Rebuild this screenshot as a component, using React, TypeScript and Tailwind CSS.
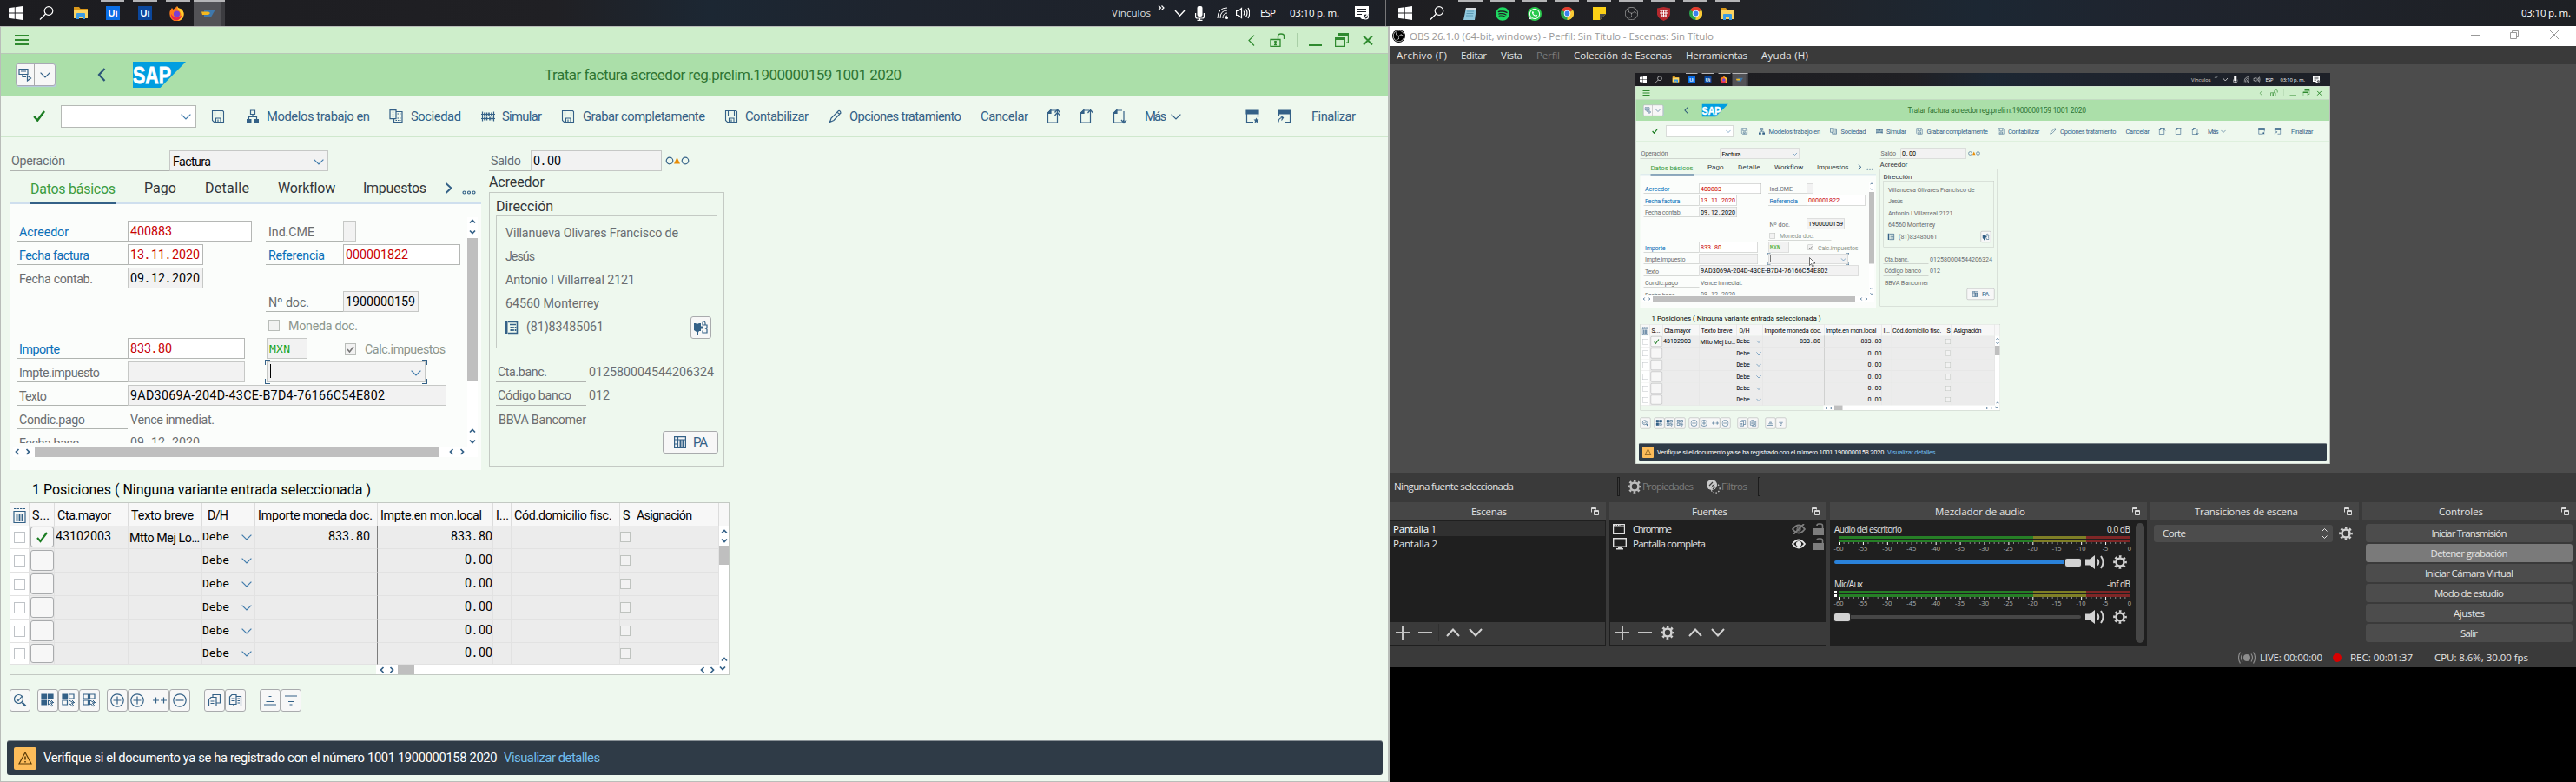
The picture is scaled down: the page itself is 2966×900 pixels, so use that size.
import React, { useLayoutEffect, useRef, useState } from "react";
import { FaSpotify, FaWhatsapp } from "react-icons/fa";
import { SiObsstudio } from "react-icons/si";

/* ---------- text ---------- */

let canvas: HTMLCanvasElement | null = null;

/** Single line of text whose tracking is computed so that it fills `w` pixels. */
function T({ w, className = "", children }: { w: number; className?: string; children: string }) {
  const ref = useRef<HTMLSpanElement>(null);
  const [tracking, setTracking] = useState(0);
  useLayoutEffect(() => {
    if (!ref.current) return;
    const cs = getComputedStyle(ref.current);
    canvas = canvas ?? document.createElement("canvas");
    const ctx = canvas.getContext("2d");
    if (!ctx) return;
    ctx.font = `${cs.fontWeight} ${cs.fontSize} ${cs.fontFamily}`;
    setTracking((w - ctx.measureText(children).width) / Math.max(1, children.length - 1));
  }, [w, children]);
  return (
    <span
      ref={ref}
      className={`block shrink-0 whitespace-pre leading-none ${className}`}
      style={{ width: w, letterSpacing: tracking }}
    >
      {children}
    </span>
  );
}

/** Fixed pitch number: every digit and point is 8px wide. */
function Mono({ children, className = "" }: { children: string; className?: string }) {
  return (
    <span className={`block shrink-0 whitespace-nowrap text-[14.25px] leading-none ${className}`}>
      {children.split(/(\.)/).map((part, i) =>
        part === "." ? (
          <span key={i} className="inline-block w-2 pr-px text-center font-medium">
            .
          </span>
        ) : (
          part
        ),
      )}
    </span>
  );
}

/* ---------- drawing helpers ---------- */

type IconProps = { className?: string; children: React.ReactNode; w?: number; h?: number };

function Ico({ className = "", children, w = 16, h = 16 }: IconProps) {
  return (
    <svg
      width={w}
      height={h}
      viewBox={`0 0 ${w} ${h}`}
      fill="none"
      stroke="currentColor"
      strokeWidth="1.2"
      className={`block shrink-0 ${className}`}
    >
      {children}
    </svg>
  );
}

function Down({ className = "text-[#427cac]" }: { className?: string }) {
  return (
    <Ico w={12} h={7} className={className}>
      <path d="M.6 .6 6 6 11.4 .6" />
    </Ico>
  );
}

const tiny = {
  up: "M1 4.5 4 1.5 7 4.5",
  down: "M1 1.5 4 4.5 7 1.5",
  left: "M4.5 1 1.5 4 4.5 7",
  right: "M1.5 1 4.5 4 1.5 7",
};

function Tiny({ dir, className = "" }: { dir: keyof typeof tiny; className?: string }) {
  const v = dir === "up" || dir === "down";
  return (
    <Ico w={v ? 8 : 6} h={v ? 6 : 8} className={`text-[#346187] ${className}`}>
      <path d={tiny[dir]} strokeWidth="1.7" />
    </Ico>
  );
}

const SaveIcon = () => (
  <Ico>
    <path d="M1.5 1.5h12l1 1v12h-11l-2-2zM4.5 1.5v6h7v-6M5.5 14.500v-4.500h5.500v4.500M8 11.500v3" strokeWidth="1.100" />
  </Ico>
);
const OrgIcon = () => (
  <Ico>
    <path d="M5.500 1h5v4.500h-5zM8 5.500v3M3.500 11V8.500h9V11" />
    <path d="M1 11h5.500v4.500H1zM9.500 11H15v4.500H9.500z" fill="currentColor" stroke="none" />
  </Ico>
);
const CompanyIcon = () => (
  <Ico>
    <path d="M1 .600h7v10H1zM8 2.500h7v12H5.500v-4M4.500 2.500v1.500M4.500 5v1.500M4.500 7.500v1.500" />
    <path d="M9.500 5h4M9.500 7.500h4M9.500 10h4M7.500 12.500h6" strokeDasharray="1.500 1" />
  </Ico>
);
const AbacusIcon = () => (
  <Ico>
    <path d="M1.500 2.500v11M14.500 2.500v11M0 5.500h16M0 10.500h16" />
    <path d="M4 3.500v4M6.500 3.500v4M9 3.500v4M12 3.500v4M4 8.500v4M6.500 8.500v4M10 8.500v4M12.500 8.500v4" strokeWidth="1.600" />
  </Ico>
);
const PencilIcon = () => (
  <Ico>
    <path d="M1.500 14.500 3 10 11.500 1.500q2-.500 2.500 2.500L6 12.500zM10 3l2.500 2.500" />
  </Ico>
);
function PageIcon({ kind }: { kind: "top" | "up" | "down" }) {
  return (
    <Ico w={17} h={18}>
      <path d="M11 2H4.500L1.500 5v11h11V13" />
      <path d="M1 5.500 5 1.500v4z" fill="currentColor" />
      {kind === "down" ? (
        <path d="M13 3v13M10 13l3 3.500 3-3.500" />
      ) : (
        <path d={kind === "up" ? "M12.500 13V1.500M9.500 5l3-3.500 3 3.500" : "M12.500 13V1M9.500 4.500l3-3.500 3 3.500M9.500 8l3-3.500 3 3.500"} />
      )}
    </Ico>
  );
}
function WindowIcon({ star }: { star?: boolean }) {
  return (
    <Ico>
      <path d="M1 1h14v4H1z" fill="currentColor" />
      {star ? (
        <>
          <path d="M1.500 5v9.500H9M14.500 5v4" />
          <path d="m12.500 9.500 1 2h2l-1.500 1.500.500 2.500-2-1.300-2 1.300.500-2.500L9.500 11.500h2z" fill="currentColor" stroke="none" />
        </>
      ) : (
        <path d="M14.500 5v9.500H8M1.500 5v2M1 14.500q0-5 5-5M3.500 7.500l3 2-2 3" />
      )}
    </Ico>
  );
}

const WindowsLogo = () => (
  <svg width="16" height="16" viewBox="0 0 16 16" className="block shrink-0 fill-white">
    <path d="M0 2.300 6.800 1.300V7.500H0zM7.700 1.200 16 0v7.500H7.700zM0 8.500h6.800v6.200L0 13.700zM7.700 8.500H16V16l-8.300-1.200z" />
  </svg>
);
const SearchGlyph = () => (
  <Ico w={17} className="text-white">
    <circle cx="11" cy="5.500" r="4.800" />
    <path d="M7.500 9 1 15.500" />
  </Ico>
);
const FolderGlyph = () => (
  <svg width="16" height="14" viewBox="0 0 16 14" className="block shrink-0">
    <path d="M0 0h6l1.500 2H16v11H0z" fill="#d9971a" />
    <path d="M0 3h16v10H0z" fill="#fcd462" />
    <path d="M3 14V8q0-1 1-1h8q1 0 1 1v6h-3v-3H6v3z" fill="#3b9be3" />
  </svg>
);
const UiPathGlyph = ({ className }: { className: string }) => (
  <div className={`flex size-4 shrink-0 items-center justify-center font-['Liberation_Sans'] text-[11px] leading-none font-bold text-white ${className}`}>
    Ui
  </div>
);
const FirefoxGlyph = () => (
  <svg width="17" height="17" viewBox="0 0 17 17" className="block shrink-0">
    <path d="M1 5 3 2l1.500 2Q7 2 9 0q1 3 4 3 4 3 3.500 7a8 7.500 0 0 1-16 0Q0 7 1 5z" fill="#ff7a1a" />
    <path d="M9 0q1 3 4 3 4 3 3.500 7a8 7.500 0 0 1-7 6.800Q16 12 12 6 9 4 9 0z" fill="#ffcf2e" />
    <circle cx="8.500" cy="9" r="3.600" fill="#7a3fd6" />
    <path d="M2 9q3 5 8 4 4-1 4.500-4-.500 7-6.500 7.300T2 9z" fill="#e8264f" />
  </svg>
);
const ChromeGlyph = () => (
  <svg width="15" height="15" viewBox="0 0 16 16" className="block shrink-0">
    <circle cx="8" cy="8" r="8" fill="#2ba24c" />
    <path d="M8 8 1.100 4A8 8 0 0 1 15 4z" fill="#e33b2e" />
    <path d="M8 8 15 4a8 8 0 0 1-7 12z" fill="#fcc934" />
    <circle cx="8" cy="8" r="4" fill="#fff" />
    <circle cx="8" cy="8" r="3.100" fill="#3b80ee" />
  </svg>
);

/* ---------- SAP screen ---------- */

function SapTaskbar() {
  return (
    <div className="relative flex h-[30px] shrink-0 items-center bg-[linear-gradient(90deg,#1c1c20_0%,#202024_40%,#1c2733_51%,#1e242e_65%,#1d2027_100%)] pl-[10px] font-['Open_Sans',sans-serif] text-[11.5px] text-white">
      <WindowsLogo />
      <div className="ml-[19px]"><SearchGlyph /></div>
      <div className="ml-[23px]"><FolderGlyph /></div>
      <div className="ml-[21px] flex items-center"><UiPathGlyph className="bg-[#0a6ee6]" /></div>
      <UiPathGlyph className="ml-[21px] bg-[#0b479c]" />
      <div className="ml-[20px]"><FirefoxGlyph /></div>
      <div className="ml-[11px] flex h-[30px] w-[36px] items-center justify-center border-r-4 border-[#3c3c40] bg-[#525256] pl-[2px]">
        <svg width="16" height="9" viewBox="0 0 16 9">
          <path d="M3 0h13l-5 8.500H3z" fill="#3f78ab" />
          <path d="M0 2.500h8l2 1.500-2 2H1z" fill="#f5b91e" />
        </svg>
      </div>
      <div className="absolute top-0 left-[116px] flex gap-[10px]">
        <div className="h-[2px] w-[27px] bg-[#b5b5b7]" />
        <div className="h-[2px] w-[28px] bg-[#b5b5b7]" />
        <div className="h-[2px] w-[28px] bg-[#b5b5b7]" />
      </div>
      <div className="absolute top-0 left-[223px] h-[2px] w-[36px] bg-[#b5b5b7]" />
      <T w={45} className="ml-[1021px] text-[#dcdcdc]">Vínculos</T>
      <Ico w={8} h={8} className="mt-[-12px] ml-[8px]"><path d="M1 1.500 3.500 4 1 6.500M4.500 1.500 7 4 4.500 6.500" /></Ico>
      <Ico w={13} h={8} className="ml-[11px]"><path d="M1 1 6.500 7 12 1" strokeWidth="1.400" /></Ico>
      <Ico w={11} h={17} className="ml-[11px]">
        <rect x="2.500" y="0" width="6" height="12" rx="2" fill="#fff" stroke="none" />
        <path d="M.6 8v4q0 2 2 2h5.800q2 0 2-2V8M5.500 14v2M2.500 16.300h6" />
      </Ico>
      <Ico w={13} h={14} className="ml-[14px]">
        <path d="M1 13Q1 1 12 1M4 13Q4 4 12 4M7 13q0-6 5-6M10 13q0-3 2-3" strokeWidth="1" />
        <circle cx="11.500" cy="12.500" r="1.500" fill="#fff" stroke="none" />
      </Ico>
      <Ico w={16} h={14} className="ml-[9px]">
        <path d="M.6 4.500h2.500L6.500 1.500v11L3 9.500H.6zM9 4.500q1.500 2.500 0 5M11.500 2.500q3 4.500 0 9M14 1q3.500 6 0 12" />
      </Ico>
      <T w={18} className="ml-[12px]">ESP</T>
      <T w={57} className="ml-[16px]">03:10 p. m.</T>
      <Ico w={17} h={16} className="ml-[18px]">
        <path d="M0 0h16v9l-3 6H8l-2-2H0z" fill="#fff" stroke="none" />
        <path d="M3 3.500h10M3 6.500h10M3 9.500h5" stroke="#1d2027" />
        <circle cx="12.500" cy="12" r="3" fill="#1d2027" />
        <path d="M10.500 14 14.500 10" />
      </Ico>
      <div className="ml-auto h-[30px] w-[5px] border-l border-[#77777a]" />
    </div>
  );
}

function SapChrome() {
  return (
    <>
      <div className="flex h-[31px] shrink-0 items-center border-b border-[#b9c8b8] bg-[#ceeecb] pl-[16px] text-[#2f8a2f]">
        <div className="flex flex-col gap-[3px]">
          <div className="h-[2px] w-[16px] bg-current" />
          <div className="h-[2px] w-[16px] bg-current" />
          <div className="h-[2px] w-[16px] bg-current" />
        </div>
        <Ico w={8} h={13} className="ml-[1404px]"><path d="M7 .6 1 6.500l6 6" /></Ico>
        <Ico w={18} h={16} className="ml-[17px]">
          <path d="M1 7.500h11v8H1zM9.500 7V3.500Q9.500 1 13 1t3.500 2.500V7" strokeWidth="1.300" />
          <path d="M6.500 9v5M5 10h3M5 13.500h3" strokeWidth="1.500" />
        </Ico>
        <div className="ml-[13px] h-4 w-px bg-[#a9cfa7]" />
        <div className="mt-[12px] ml-[13px] h-[2px] w-[15px] bg-current" />
        <Ico w={16} h={16} className="ml-[15px]">
          <path d="M4 0h12v3H4zM0 5h12v3H0z" fill="currentColor" stroke="none" />
          <path d="M.6 6v9.400h10.800V6M15.400 2v9H13" />
        </Ico>
        <Ico w={12} h={11} className="ml-[16px]"><path d="m1 .500 10 10M11 .500l-10 10" strokeWidth="2" /></Ico>
      </div>
      <div className="flex h-[48px] shrink-0 items-center bg-[#abdfa9] pl-[17px]">
        <div className="flex h-[26px] w-[46px] rounded-[3px] border border-[#a9a9b5] bg-[#f7f7f7] shadow-[1px_1px_1px_#b9c9e4]">
          <div className="flex w-[21px] items-center justify-center border-r border-[#a9a9a9]">
            <Ico w={16} h={16} className="text-[#346187]">
              <path d="M1 1.500h10v6H1zM3 4h6M5 7.500v3h4M10.500 9v6l4-3z" />
            </Ico>
          </div>
          <div className="flex flex-1 items-center justify-center"><Down className="text-[#346187]" /></div>
        </div>
        <Ico w={10} h={16} className="ml-[48px] text-[#2b5578]"><path d="M8.500 1 2 8l6.500 7" strokeWidth="2.200" /></Ico>
        <svg width="62" height="30" viewBox="0 0 62 30" className="ml-[31px] block shrink-0">
          <path d="M0 0h61L31.500 30H0z" fill="#009ee0" />
          <text x="0" y="24.500" textLength="44" lengthAdjust="spacingAndGlyphs" fontFamily="Liberation Sans" fontWeight="700" fontSize="27" fill="#fff" stroke="#fff" strokeWidth=".9">
            SAP
          </text>
        </svg>
        <T w={411} className="mt-px ml-[412px] text-[17px] text-[#2f7533]">Tratar factura acreedor reg.prelim.1900000159 1001 2020</T>
      </div>
      <div className="flex h-[48px] shrink-0 items-center border-b border-[#cfe8cd] pt-px pl-[37px] text-[14.75px] text-[#346187]">
        <Ico w={14} h={13} className="mb-[2px] text-[#1c7d23]"><path d="m1.200 7 4 4.500L13 1" strokeWidth="2.500" /></Ico>
        <div className="ml-[18px] flex h-[26px] w-[156px] items-center justify-end border border-[#b5b9b5] bg-white pr-[5px]"><Down /></div>
        <div className="ml-[17px]"><SaveIcon /></div>
        <div className="ml-[24px]"><OrgIcon /></div>
        <T w={119} className="mt-px ml-[8px]">Modelos trabajo en</T>
        <div className="ml-[22px]"><CompanyIcon /></div>
        <T w={58} className="mt-px ml-[9px]">Sociedad</T>
        <div className="ml-[23px]"><AbacusIcon /></div>
        <T w={46} className="mt-px ml-[8px]">Simular</T>
        <div className="ml-[22px]"><SaveIcon /></div>
        <T w={141} className="mt-px ml-[9px]">Grabar completamente</T>
        <div className="ml-[22px]"><SaveIcon /></div>
        <T w={73} className="mt-px ml-[8px]">Contabilizar</T>
        <div className="ml-[23px]"><PencilIcon /></div>
        <T w={129} className="mt-px ml-[8px]">Opciones tratamiento</T>
        <T w={55} className="mt-px ml-[22px]">Cancelar</T>
        <div className="ml-[21px]"><PageIcon kind="top" /></div>
        <div className="ml-[21px]"><PageIcon kind="up" /></div>
        <div className="ml-[21px]"><PageIcon kind="down" /></div>
        <T w={25} className="mt-px ml-[20px]">Más</T>
        <Down className="ml-[5px] text-[#346187]" />
        <div className="ml-[74px]"><WindowIcon star /></div>
        <div className="ml-[21px]"><WindowIcon /></div>
        <T w={51} className="mt-px ml-[23px]">Finalizar</T>
      </div>
    </>
  );
}

function Label({ w, text, className = "", box = "w-[128px]" }: { w: number; text: string; className?: string; box?: string }) {
  return (
    <div className={`flex h-[24px] shrink-0 items-center border-b border-[#b0b4b0] pl-[3px] ${box}`}>
      <T w={w} className={`mt-[3px] ${className || "text-[#6a6d70]"}`}>{text}</T>
    </div>
  );
}

function Field({ box, gray, children }: { box: string; gray?: boolean; children?: React.ReactNode }) {
  return (
    <div className={`flex h-[24px] shrink-0 items-center border pl-[2px] ${gray ? "border-[#c6c8c6] bg-[#f2f2f2]" : "border-[#b5b7b5] bg-white"} ${box}`}>
      {children}
    </div>
  );
}

const FormRow = ({ children }: { children: React.ReactNode }) => <div className="flex h-[27px] shrink-0 items-start">{children}</div>;
const LeftHalf = ({ children }: { children?: React.ReactNode }) => <div className="flex w-[287px] shrink-0">{children}</div>;

function FormPanel() {
  const blue = "text-[#0a6fb8]";
  return (
    <div className="flex h-[306px] w-[543px] flex-col bg-[#fbfdfb]">
      <div className="flex h-[279px]">
        <div className="flex h-[275px] w-[527px] flex-col overflow-hidden pt-[19px] pl-[8px] text-[14.25px]">
          <FormRow>
            <LeftHalf>
              <Label w={57} text="Acreedor" className={blue} />
              <Field box="w-[143px]"><Mono className="text-[#c80000]">400883</Mono></Field>
            </LeftHalf>
            <Label w={53} text="Ind.CME" box="w-[89px]" />
            <Field box="w-[15px]" gray />
          </FormRow>
          <FormRow>
            <LeftHalf>
              <Label w={81} text="Fecha factura" className={blue} />
              <Field box="w-[87px]"><Mono className="text-[#c80000]">13.11.2020</Mono></Field>
            </LeftHalf>
            <Label w={65} text="Referencia" className={blue} box="w-[89px]" />
            <Field box="w-[135px]"><Mono className="text-[#c80000]">000001822</Mono></Field>
          </FormRow>
          <FormRow>
            <Label w={85} text="Fecha contab." />
            <Field box="w-[87px]" gray><Mono>09.12.2020</Mono></Field>
          </FormRow>
          <FormRow>
            <LeftHalf />
            <Label w={47} text="Nº doc." box="w-[89px]" />
            <Field box="w-[87px]" gray><Mono>1900000159</Mono></Field>
          </FormRow>
          <FormRow>
            <LeftHalf />
            <div className="flex h-[24px] w-[145px] items-center border-b border-[#b0b4b0] pl-[3px]">
              <div className="mt-px size-[13px] border border-[#b9bdb9] bg-[#f2f2f2]" />
              <T w={80} className="mt-[3px] ml-[10px] text-[#8d968d]">Moneda doc.</T>
            </div>
          </FormRow>
          <FormRow>
            <LeftHalf>
              <Label w={47} text="Importe" className={blue} />
              <Field box="w-[135px]"><Mono className="text-[#c80000]">833.80</Mono></Field>
            </LeftHalf>
            <div className="ml-px flex">
              <Field box="w-[47px]" gray>
                <T w={24} className="font-['DejaVu_Sans_Mono',monospace] text-[13px] text-[#1ea51e]">MXN</T>
              </Field>
              <div className="mt-[6px] ml-[43px] flex size-[13px] items-center justify-center border border-[#b9bdb9] bg-[#f2f2f2]">
                <Ico w={9} h={8} className="text-[#777]"><path d="m1 4 2.500 3L8 1" strokeWidth="1.600" /></Ico>
              </div>
              <T w={93} className="mt-[6px] ml-[10px] text-[#8d968d]">Calc.impuestos</T>
            </div>
          </FormRow>
          <FormRow>
            <LeftHalf>
              <Label w={93} text="Impte.impuesto" />
              <Field box="w-[135px]" gray />
            </LeftHalf>
            <div className="relative ml-px flex h-[24px] w-[183px] items-center justify-between border border-[#c6c8c6] bg-[#f2f2f2] pr-[4px] pl-[3px]">
              <div className="mb-[2px] h-[16px] w-px bg-black" />
              <Down className="mt-[3px] text-[#427cac]" />
              <div className="absolute -top-[3px] -left-[3px] size-[6px] border-t border-l border-[#346187]" />
              <div className="absolute -top-[3px] -right-[3px] size-[6px] border-t border-r border-[#346187]" />
              <div className="absolute -bottom-[3px] -left-[3px] size-[6px] border-b border-l border-[#346187]" />
              <div className="absolute -right-[3px] -bottom-[3px] size-[6px] border-r border-b border-[#346187]" />
            </div>
          </FormRow>
          <FormRow>
            <Label w={32} text="Texto" />
            <Field box="w-[367px]" gray><T w={293} className="mt-px">9AD3069A-204D-43CE-B7D4-76166C54E802</T></Field>
          </FormRow>
          <FormRow>
            <Label w={76} text="Condic.pago" />
            <T w={97} className="mt-[6px] ml-[3px] text-[#6a6d70]">Vence inmediat.</T>
          </FormRow>
          <FormRow>
            <Label w={69} text="Fecha base" />
            <div className="mt-[5px] ml-[3px] text-[#6a6d70]"><Mono>09.12.2020</Mono></div>
          </FormRow>
        </div>
        <div className="mt-[15px] flex h-[264px] w-[12px] flex-col items-center bg-white">
          <Tiny dir="up" className="mt-[2px]" />
          <Tiny dir="down" className="mt-[6px]" />
          <div className="mt-[4px] h-[165px] w-[12px] bg-[#bfbfbf]" />
          <Tiny dir="up" className="mt-[54px]" />
          <Tiny dir="down" className="mt-[6px]" />
        </div>
      </div>
      <div className="ml-[4px] flex h-[12px] w-[535px] items-center bg-white">
        <Tiny dir="left" className="ml-[2px]" />
        <Tiny dir="right" className="ml-[6px]" />
        <div className="ml-[5px] h-[12px] w-[466px] bg-[#bfbfbf]" />
        <Tiny dir="left" className="ml-[11px]" />
        <Tiny dir="right" className="ml-[6px]" />
      </div>
    </div>
  );
}

function VendorPanel() {
  return (
    <div className="flex w-[271px] flex-col text-[14.25px] text-[#6a6d70]">
      <div className="flex h-[24px] items-center">
        <div className="flex h-[24px] w-[48px] items-center border-b border-[#b0b4b0] pt-[2px] pl-[2px]"><T w={35}>Saldo</T></div>
        <Field box="w-[151px]" gray><Mono className="text-black">0.00</Mono></Field>
        <Ico w={28} h={10} className="ml-[4px] text-[#346187]">
          <circle cx="5" cy="5" r="3.800" />
          <path d="M10 8.500 13.500 1 17 8.500z" fill="#e78c07" stroke="none" />
          <circle cx="23" cy="5" r="3.800" />
        </Ico>
      </div>
      <T w={64} className="mt-[5px] text-[16px] text-[#32363a]">Acreedor</T>
      <div className="mt-[3px] flex h-[316px] flex-col border border-[#c4cac4] pl-[7px]">
        <T w={66} className="mt-[8px] text-[16px] text-[#32363a]">Dirección</T>
        <div className="mt-[2px] flex h-[153px] w-[255px] flex-col border border-[#c4cac4] pt-[6px] pl-[10px]">
          <div className="flex h-[27px] items-center"><T w={199}>Villanueva Olivares Francisco de</T></div>
          <div className="flex h-[27px] items-center"><T w={34}>Jesús</T></div>
          <div className="flex h-[27px] items-center"><T w={149}>Antonio I Villarreal 2121</T></div>
          <div className="flex h-[27px] items-center"><T w={108}>64560 Monterrey</T></div>
          <div className="flex h-[27px] items-center">
            <Ico w={16} className="-ml-px text-[#346187]">
              <path d="M0 0h3.500v15H0z" fill="currentColor" stroke="none" />
              <path d="M4 1.500h10.500v13H4M6 4.500h7" strokeWidth="1.600" />
              <path d="M6.500 8h7M6.500 11h7" strokeWidth="1.800" strokeDasharray="1.700 .9" />
            </Ico>
            <T w={89} className="ml-[9px]">(81)83485061</T>
            <div className="ml-[100px] flex h-[26px] w-[24px] items-center justify-center rounded-[3px] border border-[#a9abad] bg-[#f7f7f7]">
              <Ico w={16} className="text-[#346187]">
                <path d="M0 3h2l1.500 1L6 3h2v3.500h2v3H8V12H6l-1 1.500V16H3v-3L0 11z" fill="currentColor" stroke="none" />
                <path d="M10 5V3q0-2 1.500-2T13 3v2h2v3l-1.500 1 1.500 1v4h-5v-2.500M9.500 5H13" />
              </Ico>
            </div>
          </div>
        </div>
        <div className="mt-[14px] flex h-[25px] items-center">
          <div className="flex h-[25px] w-[104px] items-center border-b border-[#b0b4b0] pt-[2px] pl-[2px]"><T w={57}>Cta.banc.</T></div>
          <T w={144} className="mt-px ml-[3px]">012580004544206324</T>
        </div>
        <div className="mt-[2px] flex h-[25px] items-center">
          <div className="flex h-[25px] w-[104px] items-center border-b border-[#b0b4b0] pt-[2px] pl-[2px]"><T w={85}>Código banco</T></div>
          <T w={24} className="mt-px ml-[3px]">012</T>
        </div>
        <div className="flex h-[29px] items-center pt-[3px] pl-[3px]"><T w={101}>BBVA Bancomer</T></div>
        <div className="ml-[192px] flex h-[26px] w-[64px] items-center rounded-[3px] border border-[#a9abad] bg-[#f7f7f7] pl-[12px] text-[#346187]">
          <Ico w={14} h={14}><path d="M.6 .6h12.800v12.800H.6zM.6 4h12.800M4.500 .6v12.800M.6 9h4" /><path d="M7.500 4v9M10.500 4v9" strokeWidth="2" /></Ico>
          <T w={17} className="ml-[8px] text-[15px]">PA</T>
        </div>
      </div>
    </div>
  );
}

const th = "flex h-full shrink-0 items-center border-r border-[#dcdcdc] pt-[2px] pl-[3px]";
const td = "flex h-full shrink-0 items-center border-r border-b border-[#e2e2e2] bg-[#ececec]";

function ItemsTable() {
  return (
    <div className="flex h-[199px] w-[829px] flex-col border border-[#c3c9c3] text-[14.25px] text-black">
      <div className="flex h-[26px] shrink-0 bg-[#f7f7f7]">
        <div className={`${th} w-[22px]`}>
          <Ico w={15} h={18} className="text-[#346187]">
            <path d="M1 1.500h13" strokeDasharray="2.500 1" />
            <path d="M1 4.500h13v13H1z" />
            <path d="M4.500 7v9M7.500 7v9M10.500 7v9" strokeWidth="1.800" />
          </Ico>
        </div>
        <div className={`${th} w-[29px]`}><T w={20}>S...</T></div>
        <div className={`${th} w-[85px]`}><T w={62}>Cta.mayor</T></div>
        <div className={`${th} w-[85px]`}><T w={72}>Texto breve</T></div>
        <div className={`${th} w-[61px]`}><T w={24} className="ml-[3px]">D/H</T></div>
        <div className={`${th} w-[141px] border-[#7d7d7d]`}><T w={132}>Importe moneda doc.</T></div>
        <div className={`${th} w-[133px]`}><T w={117}>Impte.en mon.local</T></div>
        <div className={`${th} w-[21px]`}><T w={15}>I...</T></div>
        <div className={`${th} w-[125px]`}><T w={112}>Cód.domicilio fisc.</T></div>
        <div className={`${th} w-[13px]`}><T w={8}>S</T></div>
        <div className={`${th} w-[101px]`}><T w={64} className="ml-[3px]">Asignación</T></div>
      </div>
      <div className="flex h-[160px] shrink-0">
        <div className="flex w-[816px] flex-col">
          {[0, 1, 2, 3, 4, 5].map((i) => (
            <div key={i} className={`flex shrink-0 ${i === 5 ? "h-[25px]" : "h-[27px]"}`}>
              <div className="flex h-full w-[22px] items-center border-r border-b border-[#e2e2e2] bg-white pl-[4px]">
                <div className="size-[13px] border border-[#bfc3c7] bg-white" />
              </div>
              <div className={`${td} w-[29px] justify-center`}>
                <div className={`flex w-[27px] items-center justify-center rounded-[3px] border border-[#a9abad] bg-[#f7f7f7] ${i === 5 ? "h-[22px]" : "h-[24px]"}`}>
                  {i === 0 && <Ico w={13} h={13} className="text-[#1c7d23]"><path d="m1 7 3.500 4L12 1" strokeWidth="2.200" /></Ico>}
                </div>
              </div>
              <div className={`${td} w-[85px] pl-px`}>{i === 0 && <Mono className="-mt-px">43102003</Mono>}</div>
              <div className={`${td} w-[85px] pl-px`}>{i === 0 && <T w={81} className="mt-[2px]">Mtto Mej Lo…</T>}</div>
              <div className={`${td} w-[61px]`}>
                <T w={31} className="-mt-px font-['DejaVu_Sans_Mono',monospace] text-[13px]">Debe</T>
                <Down className="mt-px ml-[14px] text-[#427cac]" />
              </div>
              <div className={`${td} w-[141px] border-r-[#7d7d7d] pl-[84px]`}>{i === 0 && <Mono className="-mt-px">833.80</Mono>}</div>
              <div className={`${td} w-[133px] justify-end`}><Mono className="-mt-px">{i === 0 ? "833.80" : "0.00"}</Mono></div>
              <div className={`${td} w-[21px]`} />
              <div className={`${td} w-[125px]`} />
              <div className={`${td} w-[13px]`}><div className="size-[12px] border border-[#bfc3bf] bg-[#f2f2f2]" /></div>
              <div className={`${td} w-[101px]`} />
            </div>
          ))}
        </div>
        <div className="flex w-[11px] flex-col items-center bg-white">
          <Tiny dir="up" className="mt-[4px]" />
          <Tiny dir="down" className="mt-[4px]" />
          <div className="mt-[3px] h-[22px] w-full bg-[#bfbfbf]" />
          <Tiny dir="up" className="mt-[106px]" />
        </div>
      </div>
      <div className="ml-[421px] flex flex-1 items-center bg-white">
        <Tiny dir="left" className="ml-[4px]" />
        <Tiny dir="right" className="ml-[5px]" />
        <div className="ml-[4px] h-full w-[19px] bg-[#bfbfbf]" />
        <Tiny dir="left" className="ml-[329px]" />
        <Tiny dir="right" className="ml-[5px]" />
        <Tiny dir="down" className="mb-[3px] ml-[5px]" />
      </div>
    </div>
  );
}

const gridCells = ["M1 1h5.500v5H1z", "M8.500 1H14v5H8.500z", "M1 8h5.500v5H1z"];

function SelectionIcon({ filled }: { filled: number[] }) {
  return (
    <Ico w={16}>
      {gridCells.map((d, i) => (
        <path key={d} d={d} fill={filled.includes(i) ? "currentColor" : "none"} />
      ))}
      <path d="M8.500 8v5l1.500-1 2 3 1.500-1-2-3H14zM12 8l3 3" strokeWidth="1" />
    </Ico>
  );
}

function Btn({ wide, children }: { wide?: boolean; children: React.ReactNode }) {
  return (
    <div className={`flex h-[26px] items-center justify-center rounded-[3px] border border-[#a9abad] bg-[#f7f7f7] text-[#346187] ${wide ? "w-[48px]" : "w-[24px]"}`}>
      {children}
    </div>
  );
}

function ItemsToolbar() {
  return (
    <div className="flex h-[26px]">
      <Btn><Ico><circle cx="6.500" cy="6.500" r="5" /><path d="m4 6.500 2 2 4-5" /><path d="m10.500 10.500 4 4" strokeWidth="2.200" /></Ico></Btn>
      <div className="ml-[8px] flex">
        <Btn><SelectionIcon filled={[0, 1, 2]} /></Btn>
        <Btn><SelectionIcon filled={[0]} /></Btn>
        <Btn><SelectionIcon filled={[]} /></Btn>
      </div>
      <div className="ml-[8px] flex">
        <Btn><Ico><circle cx="8" cy="8" r="7.200" /><path d="M3.500 8h9M8 3.500v9" /></Ico></Btn>
        <Btn wide>
          <Ico><circle cx="8" cy="8" r="7.200" /><path d="M3.500 8h9M8 3.500v9" /></Ico>
          <Ico w={16} className="ml-[10px]"><path d="M0 8h7M3.500 4.500v7M9 8h7M12.500 4.500v7" /></Ico>
        </Btn>
        <Btn><Ico><circle cx="8" cy="8" r="7.200" /><path d="M3.500 8h9" /></Ico></Btn>
      </div>
      <div className="ml-[16px] flex">
        <Btn><Ico><path d="M4 4.500h6v10H1.500V7zM6 4V1.500h8.500v9.500H10M3.500 9h4M3.500 11.500h4" /></Ico></Btn>
        <Btn><Ico><path d="M4 1.500h5v11H1.500V4zM9 3.500h5.500v11H6V13M3.500 6h4M3.500 8.500h4M10.500 6H13M10.500 8.500H13M10.500 11H13" /></Ico></Btn>
      </div>
      <div className="ml-[16px] flex">
        <Btn><Ico><path d="M6.500 3.500h3M5 6.500h6M3.500 9.500h9M1 13h14" /></Ico></Btn>
        <Btn><Ico><path d="M1 3h14M3.500 6.500h9M5 9.500h6M6.500 13h3" /></Ico></Btn>
      </div>
    </div>
  );
}

function SapScreen() {
  return (
    <div className="flex h-[900px] w-[1600px] shrink-0 flex-col bg-[#eef8ee] font-['Roboto',sans-serif] text-black">
      <SapTaskbar />
      <div className="flex h-[870px] flex-col border border-r-2 border-[#b9bdb9]">
        <SapChrome />
        <div className="mt-[15px] ml-[10px] flex">
          <div className="w-[543px]">
            <div className="flex h-[24px] text-[14.25px]">
              <div className="flex w-[184px] items-center border-b border-[#b0b4b0] pt-[2px] pl-[2px]"><T w={62} className="text-[#6a6d70]">Operación</T></div>
              <div className="flex w-[183px] items-center justify-between border border-[#c6c8c6] bg-[#f2f2f2] pt-[2px] pr-[4px] pl-[3px]">
                <T w={44} className="text-black">Factura</T>
                <Down />
              </div>
            </div>
            <div className="flex h-[38px] text-[16px] text-[#32363a]">
              <div className="relative ml-[24px] flex w-[99px] items-center pt-[3px]">
                <T w={98} className="text-[#3c9c3e]">Datos básicos</T>
                <div className="absolute bottom-0 left-0 h-[2px] w-[99px] bg-[#346187]" />
              </div>
              <div className="flex h-[38px] items-center pt-px">
                <T w={37} className="ml-[32px]">Pago</T>
                <T w={51} className="ml-[33px]">Detalle</T>
                <T w={66} className="ml-[33px]">Workflow</T>
                <T w={73} className="ml-[32px]">Impuestos</T>
                <Ico w={9} h={13} className="ml-[21px] text-[#346187]"><path d="m1.500 1 6 5.500-6 5.500" strokeWidth="2" /></Ico>
                <Ico w={16} h={5} className="mt-[9px] ml-[11px] text-[#346187]">
                  <circle cx="2.500" cy="2.500" r="1.500" /><circle cx="8" cy="2.500" r="1.500" /><circle cx="13.500" cy="2.500" r="1.500" />
                </Ico>
              </div>
            </div>
            <div className="-mt-[2px] h-[2px] border-t-2 border-[#cfdfee]" />
            <FormPanel />
          </div>
          <div className="w-[9px]" />
          <VendorPanel />
        </div>
        <T w={390} className="mt-[15px] ml-[36px] text-[16px] text-black">1 Posiciones ( Ninguna variante entrada seleccionada )</T>
        <div className="mt-[6px] ml-[10px]"><ItemsTable /></div>
        <div className="mt-[16px] ml-[10px]"><ItemsToolbar /></div>
        <div className="mt-auto mb-[7px] ml-[7px] flex h-[40px] w-[1584px] shrink-0 items-center rounded-[3px] border-t border-[#8b9398] bg-[#2f3b47] pl-[8px] text-[14.75px]">
          <div className="flex size-[26px] items-center justify-center rounded-[2px] bg-[#fcbc5a] text-[#5c3c08]">
            <Ico w={16} h={15}><path d="M8 1 15 14H1z" /><path d="M8 5.500v4M8 11v1.500" strokeWidth="1.600" /></Ico>
          </div>
          <T w={522} className="ml-[8px] text-white">Verifique si el documento ya se ha registrado con el número 1001 1900000158 2020</T>
          <T w={111} className="ml-[8px] text-[#71bdee]">Visualizar detalles</T>
        </div>
      </div>
    </div>
  );
}

/* ---------- OBS screen ---------- */

function Gear({ className = "text-[#d2d2d2]" }: { className?: string }) {
  return (
    <svg width="16" height="16" viewBox="0 0 16 16" fill="none" stroke="currentColor" className={`block shrink-0 ${className}`}>
      <circle cx="8" cy="8" r="4.500" strokeWidth="2.600" />
      <circle cx="8" cy="8" r="6.600" strokeWidth="2.500" strokeDasharray="2.600 2.584" strokeDashoffset="1.300" />
    </svg>
  );
}

const taskIcons: React.ReactNode[] = [
  <svg key="n" width="16" height="16" viewBox="0 0 16 16"><path d="M3 1h12l-2 14H0z" fill="#8fc7dd" /><path d="M3 1h12l-.4 2H2.600z" fill="#d8dde0" /><path d="M4 5h8M3.500 7.500h8M3 10h8" stroke="#5b9ab5" /></svg>,
  <FaSpotify key="s" size={16} color="#1ed760" />,
  <div key="w" className="flex size-4 items-center justify-center rounded-full bg-[#2ac94d]"><FaWhatsapp size={14} color="#fff" /></div>,
  <ChromeGlyph key="c" />,
  <svg key="y" width="15" height="15" viewBox="0 0 15 15"><path d="M0 0h15v8l-7 7H0z" fill="#fcd116" /><path d="M8 15V8h7z" fill="#4b4b4b" /></svg>,
  <SiObsstudio key="o" size={15} color="#9b9b9b" />,
  <svg key="r" width="15" height="16" viewBox="0 0 15 16"><path d="M0 1.500 7.500 0 15 1.500v7Q14 13 7.500 16 1 13 0 8.500z" fill="#b3282d" /><path d="M3 4h9M3 7h9M4 10h7M5 3v8M7.500 3v9M10 3v8" stroke="#fff" /></svg>,
  <ChromeGlyph key="c2" />,
  <FolderGlyph key="f" />,
];

function ObsTaskbar() {
  return (
    <div className="flex h-[30px] shrink-0 items-center bg-[linear-gradient(90deg,#1e1e21_0%,#222327_30%,#1c2733_50%,#1f242e_65%,#1e2024_100%)] pl-[10px]">
      <WindowsLogo />
      <div className="ml-[20px]"><SearchGlyph /></div>
      <div className="ml-[16px] flex h-full gap-[9px]">
        {taskIcons.map((icon, i) => (
          <div key={i} className="flex w-[28px] flex-col border-t-2 border-[#b5b5b7]">
            <div className="flex h-[27px] items-center justify-center">{icon}</div>
          </div>
        ))}
      </div>
      <T w={57} className="mr-[6px] ml-auto text-white">03:10 p. m.</T>
    </div>
  );
}

function Dock({ title, w, box, pad, children }: { title: string; w: number; box: string; pad: string; children: React.ReactNode }) {
  return (
    <div className={`flex h-[165px] shrink-0 flex-col ${box}`}>
      <div className={`flex h-[21px] shrink-0 items-center justify-between bg-[#464646] pr-[8px] ${pad}`}>
        <T w={w}>{title}</T>
        <Ico w={9} h={9} className="text-[#d8d8d8]">
          <path d="M.5 5.500V.5h5v2M.5 1.500h5M3.500 3.500h5v5h-5zM3.500 4.500h5" strokeWidth="1" />
        </Ico>
      </div>
      {children}
    </div>
  );
}

const Plus = () => <Ico><path d="M0 8h16M8 0v16" strokeWidth="2" stroke="#c4c4c4" /></Ico>;
const Minus = () => <Ico><path d="M0 8h16" strokeWidth="2" stroke="#c4c4c4" /></Ico>;
const ChUp = () => <Ico h={10}><path d="M1 9 8 1.500 15 9" strokeWidth="2" /></Ico>;
const ChDown = () => <Ico h={10}><path d="M1 1 8 8.500 15 1" strokeWidth="2" /></Ico>;

function DockToolbar({ gear }: { gear?: boolean }) {
  return (
    <div className="mt-auto flex h-[28px] shrink-0 items-center border border-[#1f1f1f] bg-[#3a3a3a] pb-[2px] pl-[6px] text-[#d2d2d2]">
      <Plus />
      <div className="ml-[10px]"><Minus /></div>
      {gear && <div className="ml-[10px]"><Gear /></div>}
      <div className="ml-[7px] h-[20px] w-px bg-[#303030]" />
      <div className="ml-[8px]"><ChUp /></div>
      <div className="ml-[10px]"><ChDown /></div>
    </div>
  );
}

const Unlock = () => (
  <Ico w={12} h={14} className="text-[#7d7d7d]">
    <path d="M0 6h12v8H0z" fill="currentColor" stroke="none" />
    <path d="M10.500 7V3q0-2-2.500-2H6Q4 1 4 3" strokeWidth="1.600" />
  </Ico>
);

function SourceRow({ label, w, visible }: { label: string; w: number; visible?: boolean }) {
  return (
    <div className="flex h-[17px] items-center pl-[4px]">
      {visible ? (
        <Ico w={16} h={14} className="text-[#dedede]"><path d="M.7 .7h14.600v9.600H.7z" strokeWidth="1.400" /><path d="M6 10h4v2h2v1.500H4V12h2z" fill="currentColor" stroke="none" /></Ico>
      ) : (
        <Ico w={16} h={14} className="text-[#dedede]"><path d="M.6 1.600h12.800v10.800H.6zM.6 4h12.800" /><path d="M1 2.500h8" strokeDasharray="1.500 1" /></Ico>
      )}
      <T w={w} className="ml-[7px]">{label}</T>
      <div className="mr-[3px] ml-auto flex items-center gap-[9px]">
        {visible ? (
          <Ico w={16} h={12} className="text-[#e8e8e8]"><path d="M1 6q7-9 14 0-7 9-14 0z" strokeWidth="1.800" /><circle cx="8" cy="6" r="2.500" fill="currentColor" /></Ico>
        ) : (
          <Ico w={16} h={12} className="text-[#7d7d7d]"><path d="M1 6q7-9 14 0-7 9-14 0zM2 12 14 0" strokeWidth="1.800" /><circle cx="8" cy="6" r="2" /></Ico>
        )}
        <Unlock />
      </div>
    </div>
  );
}

const Speaker = () => (
  <Ico w={24} h={16} className="text-[#d2d2d2]">
    <path d="M0 4.500h5L11 0v16l-6-4.500H0z" fill="currentColor" stroke="none" />
    <path d="M14 4.500q2.500 3.500 0 7M18 1q5 7 0 14" strokeWidth="2" />
  </Ico>
);

const levels = [-60, -55, -50, -45, -40, -35, -30, -25, -20, -15, -10, -5, 0];

function MixerChannel({ name, nameW, db, dbW, full }: { name: string; nameW: number; db: string; dbW: number; full?: boolean }) {
  const bar = (
    <div className="flex h-[3px]">
      <div className={`w-[3px] ${full ? "bg-transparent" : "bg-white"}`} />
      <div className="ml-[2px] w-[224px] bg-[#267f26]" />
      <div className="w-[61px] bg-[#7f7f26]" />
      <div className="w-[51px] bg-[#7f2626]" />
    </div>
  );
  return (
    <div className="flex h-[63px] w-[341px] flex-col">
      <div className="flex h-[14px] items-center justify-between text-[10px] text-[#e2e2e2]">
        <T w={nameW}>{name}</T>
        <T w={dbW}>{db}</T>
      </div>
      <div className="mt-[1px] flex flex-col gap-px">{bar}{bar}</div>
      <svg width="337" height="4" viewBox="0 0 337 4" className="ml-[5px] block">
        {Array.from({ length: 61 }, (_, i) => (
          <rect key={i} x={i * 5.583} y="0" width="1" height={i % 5 === 0 ? 3 : 2} fill={i % 5 === 0 ? "#fff" : "#8a8a8a"} />
        ))}
      </svg>
      <div className="ml-[5px] flex w-[335px] justify-between text-[7.500px] leading-[7px] text-[#b0b0b0]">
        {levels.map((l) => (
          <div key={l} className="flex w-0 justify-center whitespace-nowrap">{l}</div>
        ))}
      </div>
      <div className="mt-[4px] flex h-[16px] items-center">
        <div className={`flex h-[4px] w-[284px] items-center rounded-full ${full ? "justify-end bg-[#2a82da]" : "bg-[#464646]"}`}>
          <div className="h-[9px] w-[18px] rounded-[2px] bg-[#d2d2d2] ring-1 ring-[#2a2a2a]" />
        </div>
        <div className="ml-[5px]"><Speaker /></div>
        <div className="ml-[8px]"><Gear /></div>
      </div>
    </div>
  );
}

function ObsButton({ label, w, active }: { label: string; w: number; active?: boolean }) {
  return (
    <div className={`flex h-[21px] w-[238px] items-center justify-center rounded-[3px] ${active ? "bg-[#7a7a7a]" : "bg-[#4c4c4c]"}`}>
      <T w={w}>{label}</T>
    </div>
  );
}

function ObsScreen() {
  return (
    <div className="flex h-[900px] w-[1366px] shrink-0 flex-col bg-black font-['Open_Sans',sans-serif] text-[11.5px] text-[#e4e4e4]">
      <ObsTaskbar />
      <div className="flex h-[23px] shrink-0 items-center bg-white pl-[3px] text-[#999]">
        <div className="flex size-[15px] items-center justify-center rounded-full bg-black"><SiObsstudio size={13} color="#fff" /></div>
        <T w={350} className="ml-[5px]">OBS 26.1.0 (64-bit, windows) - Perfil: Sin Título - Escenas: Sin Título</T>
        <Ico w={10} h={10} className="mb-[3px] ml-auto"><path d="M0 5.500h10" strokeWidth="1" /></Ico>
        <Ico w={10} h={10} className="mb-[3px] ml-[35px]"><path d="M.5 2.500h7v7h-7zM2.500 2.500v-2h7v7h-2" strokeWidth="1" /></Ico>
        <Ico w={10} h={10} className="mr-[20px] mb-[3px] ml-[36px]"><path d="m0 0 10 10M10 0 0 10" strokeWidth="1" /></Ico>
      </div>
      <div className="flex h-[21px] shrink-0 items-center gap-4 bg-[#3a3a3a] pl-[8px]">
        <T w={58}>Archivo (F)</T>
        <T w={30}>Editar</T>
        <T w={25}>Vista</T>
        <T w={27} className="text-[#7c7c7c]">Perfil</T>
        <T w={113}>Colección de Escenas</T>
        <T w={71}>Herramientas</T>
        <T w={54}>Ayuda (H)</T>
      </div>
      <div className="h-[470px] shrink-0 bg-[#4c4c4c] pt-[10px] pl-[283px]">
        <div className="relative h-[450px] w-[800px] overflow-hidden">
          <div className="h-[900px] w-[1600px] origin-top-left scale-50">
            <SapScreen />
          </div>
          <svg width="8" height="12" viewBox="0 0 8 12" className="absolute top-[212px] left-[200px]">
            <path d="M.5 .5v9l2-2 1.500 3.500 1.300-.6L4 7h3z" fill="#fff" stroke="#333" strokeWidth=".7" />
          </svg>
        </div>
      </div>
      <div className="flex h-[224px] shrink-0 flex-col bg-[#3a3a3a]">
        <div className="flex h-[34px] shrink-0 items-center pb-[2px] pl-[5px]">
          <T w={138}>Ninguna fuente seleccionada</T>
          <div className="ml-[119px] h-[22px] w-[3px] border border-[#1c1c1c]" />
          <Gear className="ml-[9px] text-[#bdbdbd]" />
          <T w={59} className="ml-[1px] text-[#7c7c7c]">Propiedades</T>
          <Ico w={16} className="ml-[15px] text-[#c9c9c9]">
            <circle cx="6" cy="6" r="6" fill="currentColor" stroke="none" />
            <path d="M3 7 7 3M5 9l4-4M7 11l3-3" stroke="#3a3a3a" />
            <circle cx="10" cy="10" r="5.200" strokeDasharray="1.500 1.500" />
          </Ico>
          <T w={30} className="ml-[1px] text-[#7c7c7c]">Filtros</T>
          <div className="ml-[12px] h-[22px] w-[3px] border border-[#1c1c1c]" />
        </div>
        <div className="flex h-[165px] shrink-0 gap-[4px]">
          <Dock title="Escenas" w={41} box="w-[249px]" pad="pl-[94px]">
            <div className="flex flex-1 flex-col bg-[#1f1f1f] pt-px">
              <div className="mx-px flex h-[17px] items-center bg-[#303030] pl-[3px]"><T w={50} className="text-white">Pantalla 1</T></div>
              <div className="mx-px flex h-[17px] items-center pl-[3px]"><T w={51}>Pantalla 2</T></div>
              <DockToolbar />
            </div>
          </Dock>
          <Dock title="Fuentes" w={41} box="w-[250px]" pad="pl-[95px]">
            <div className="flex flex-1 flex-col bg-[#1f1f1f] pt-px">
              <SourceRow label="Chromme" w={45} />
              <SourceRow label="Pantalla completa" w={84} visible />
              <DockToolbar gear />
            </div>
          </Dock>
          <Dock title="Mezclador de audio" w={104} box="w-[365px]" pad="pl-[121px]">
            <div className="flex flex-1 bg-[#1f1f1f] pt-[3px] pl-[5px]">
              <div className="w-[341px]">
                <MixerChannel name="Audio del escritorio" nameW={78} db="0.0 dB" dbW={27} full />
                <MixerChannel name="Mic/Aux" nameW={33} db="-inf dB" dbW={27} />
              </div>
              <div className="ml-[6px] h-[138px] w-[10px] rounded-full bg-[#464646]" />
            </div>
          </Dock>
          <Dock title="Transiciones de escena" w={119} box="w-[240px]" pad="pl-[51px]">
            <div className="flex items-center pt-[5px] pl-[4px]">
              <div className="flex h-[20px] w-[206px] items-center rounded-[3px] bg-[#4c4c4c] pl-[10px]">
                <T w={27}>Corte</T>
                <div className="ml-auto flex h-[20px] w-[21px] flex-col items-center justify-center gap-[4px] border-l border-[#3a3a3a]">
                  <Ico w={7} h={4}><path d="m.5 3.500 3-3 3 3" strokeWidth="1" /></Ico>
                  <Ico w={7} h={4}><path d="m.5 .5 3 3 3-3" strokeWidth="1" /></Ico>
                </div>
              </div>
              <div className="ml-[7px]"><Gear /></div>
            </div>
          </Dock>
          <Dock title="Controles" w={51} box="w-[246px]" pad="pl-[88px]">
            <div className="flex flex-col gap-[2px] pt-[4px] pl-[4px]">
              <ObsButton label="Iniciar Transmisión" w={87} />
              <ObsButton label="Detener grabación" w={89} active />
              <ObsButton label="Iniciar Cámara Virtual" w={102} />
              <ObsButton label="Modo de estudio" w={80} />
              <ObsButton label="Ajustes" w={36} />
              <ObsButton label="Salir" w={20} />
            </div>
          </Dock>
        </div>
        <div className="flex flex-1 items-center pt-[3px] pl-[977px]">
          <Ico w={20} h={14} className="text-[#8c8c8c]">
            <circle cx="10" cy="7" r="4" fill="currentColor" stroke="none" />
            <path d="M5 2.500q-3 4.500 0 9M15 2.500q3 4.500 0 9M2.500 .5q-4 6.500 0 13M17.500 .5q4 6.500 0 13" />
          </Ico>
          <T w={72} className="ml-[5px]">LIVE: 00:00:00</T>
          <div className="ml-[12px] size-[10px] rounded-full bg-[#d80000]" />
          <T w={72} className="ml-[10px]">REC: 00:01:37</T>
          <T w={108} className="ml-[25px]">CPU: 8.6%, 30.00 fps</T>
        </div>
      </div>
    </div>
  );
}

export default function App() {
  return (
    <div className="flex h-[900px] w-[2966px] overflow-hidden bg-black">
      <SapScreen />
      <ObsScreen />
    </div>
  );
}
